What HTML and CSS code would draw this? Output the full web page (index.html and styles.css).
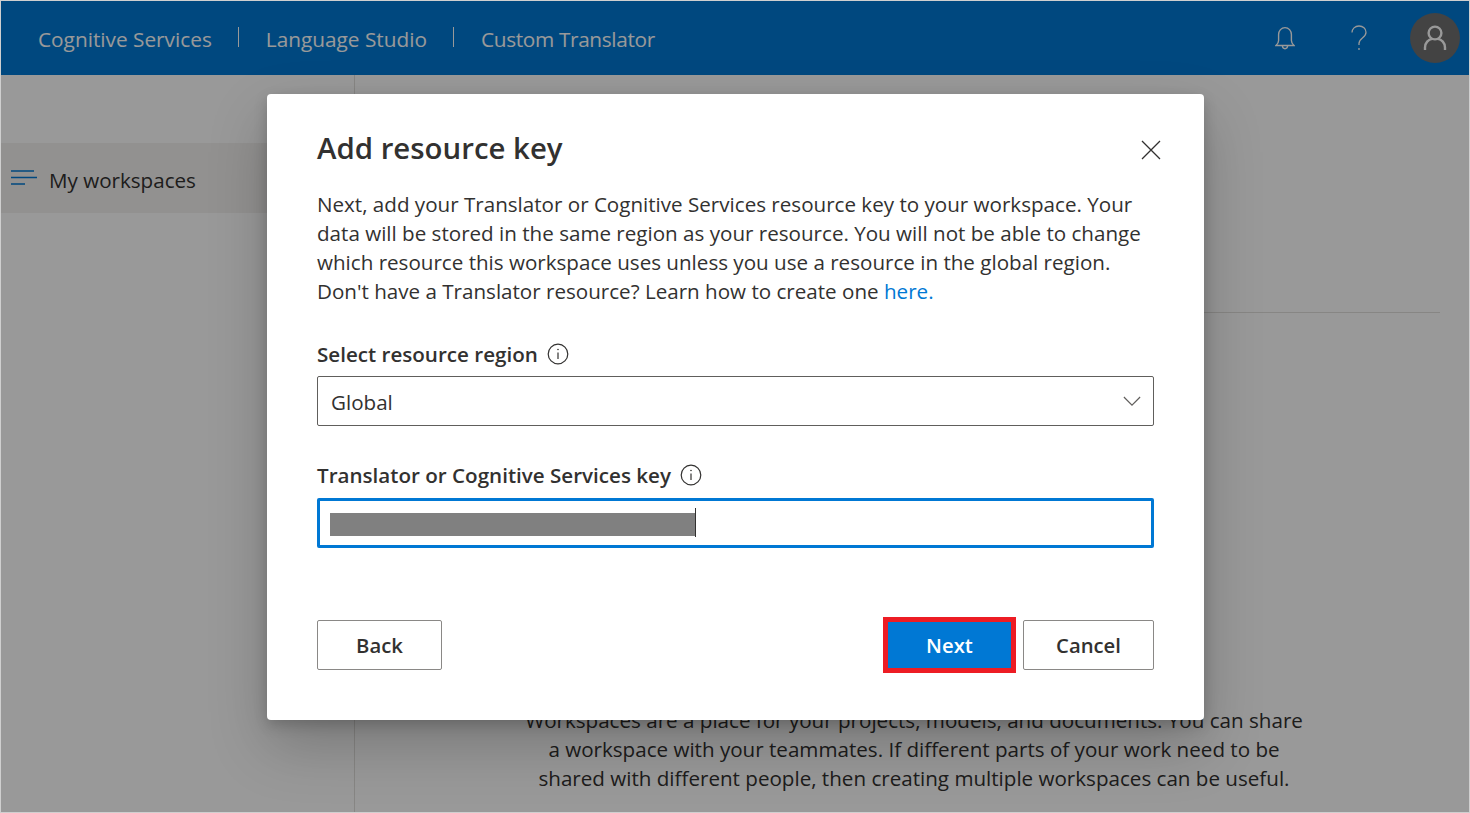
FILE: index.html
```html
<!DOCTYPE html>
<html>
<head>
  <title>Custom Translator - Add resource key</title>
  <link rel="stylesheet" href="styles.css">
</head>
<body>
  <div class="frame">
    <header class="topbar">
      <nav class="crumbs">
        <a class="crumb" href="#">Cognitive Services</a>
        <span class="crumb-sep"></span>
        <a class="crumb" href="#">Language Studio</a>
        <span class="crumb-sep"></span>
        <a class="crumb crumb-last" href="#">Custom Translator</a>
      </nav>
      <div class="top-actions">
        <svg class="bell-icon" width="20" height="24" viewBox="0 0 20 24" fill="none" stroke="#fff" stroke-width="1.400">
          <path d="M1 19.5h18c-1.6-1.4-2.6-2.7-2.6-5V8.6C16.4 4.6 13.6 1.6 10 1.6S3.6 4.6 3.6 8.6v5.900c0 2.300-1 3.600-2.600 5z"/>
          <path d="M7.400 20c.2 1.500 1.300 2.700 2.600 2.700s2.400-1.200 2.600-2.700"/>
        </svg>
        <svg class="help-icon" width="16" height="26" viewBox="0 0 16 26" fill="none" stroke="#fff" stroke-width="1.300">
          <path d="M1 7.500C1 3.800 4 1 8 1s7 2.700 7 6.200c0 2.800-1.600 4.200-3.600 5.700-2.200 1.700-3.400 3-3.400 5.600v1.500"/>
          <circle cx="8" cy="24" r=".9" fill="#fff" stroke="none"/>
        </svg>
        <div class="avatar">
          <svg width="24" height="26" viewBox="0 0 24 26" fill="none" stroke="#fff" stroke-width="2.400">
            <circle cx="12" cy="8" r="6.400"/>
            <path d="M2 25v-2.500c0-4.600 3.400-8.100 7.200-8.600M22 25v-2.500c0-4.600-3.400-8.100-7.200-8.600"/>
          </svg>
        </div>
      </div>
    </header>

    <div class="page">
      <aside class="sidebar">
        <div class="side-item">
          <svg class="menu-icon" width="26" height="16" viewBox="0 0 26 16" stroke="#0078d4" stroke-width="1.400">
            <path d="M0 1h23M0 7.500h26M0 14h14"/>
          </svg>
          <span class="side-text">My workspaces</span>
        </div>
      </aside>
      <main class="content">
        <div class="content-rule"></div>
        <p class="intro">Workspaces are a place for your projects, models, and documents. You can share<br>a workspace with your teammates. If different parts of your work need to be<br>shared with different people, then creating multiple workspaces can be useful.</p>
      </main>
    </div>

    <div class="scrim">
      <div class="dialog">
        <div class="dialog-head">
          <h2>Add resource key</h2>
          <svg class="close-icon" width="20" height="20" viewBox="0 0 20 20" stroke="#323130" stroke-width="1.300">
            <path d="M1 1l18 18M19 1L1 19"/>
          </svg>
        </div>
        <p class="dialog-text">Next, add your Translator or Cognitive Services resource key to your workspace. Your<br>data will be stored in the same region as your resource. You will not be able to change<br>which resource this workspace uses unless you use a resource in the global region.<br>Don't have a Translator resource? Learn how to create one <a href="#">here.</a></p>

        <label class="field-label region-label">Select resource region
          <svg class="info-icon" width="22" height="22" viewBox="0 0 22 22" fill="none" stroke="#323130" stroke-width="1.200">
            <circle cx="11" cy="11" r="9.800"/>
            <path d="M11 9.500v6.500"/>
            <circle cx="11" cy="6.500" r=".8" fill="#323130" stroke="none"/>
          </svg>
        </label>
        <div class="select-box">
          <span class="select-value">Global</span>
          <svg width="18" height="11" viewBox="0 0 20 12" fill="none" stroke="#605e5c" stroke-width="1.300">
            <path d="M1 1l9 9 9-9"/>
          </svg>
        </div>

        <label class="field-label key-label">Translator or Cognitive Services key
          <svg class="info-icon" width="22" height="22" viewBox="0 0 22 22" fill="none" stroke="#323130" stroke-width="1.200">
            <circle cx="11" cy="11" r="9.800"/>
            <path d="M11 9.500v6.500"/>
            <circle cx="11" cy="6.500" r=".8" fill="#323130" stroke="none"/>
          </svg>
        </label>
        <div class="key-box">
          <div class="key-mask"></div>
        </div>

        <div class="dialog-foot">
          <button class="btn">Back</button>
          <div class="foot-right">
            <button class="btn btn-primary">Next</button>
            <button class="btn btn-cancel">Cancel</button>
          </div>
        </div>
      </div>
    </div>
  </div>
</body>
</html>
```

FILE: styles.css
```css
* {
  box-sizing: border-box;
}

body {
  margin: 0;
  font-family: "Open Sans", "Noto Sans", sans-serif;
  font-size: 20.6px;
  color: #323130;
}

.frame {
  position: relative;
  width: 1470px;
  height: 813px;
  border: 1px solid #cfcfcf;
  background-color: #fff;
  overflow: hidden;
}

.topbar {
  display: flex;
  justify-content: space-between;
  align-items: center;
  height: 74px;
  padding: 0 9px 0 37px;
  background-color: #0078d4;
}

.crumbs {
  display: flex;
  align-items: center;
  padding-top: 2px;
  font-size: 20.8px;
}

.crumb {
  color: #fff;
  text-decoration: none;
}

.crumb-last {
  letter-spacing: -0.35px;
}

.crumb-sep {
  width: 1px;
  height: 20px;
  margin: 0 27px 4px 26px;
  background-color: #fff;
}

.top-actions {
  display: flex;
  align-items: center;
}

.bell-icon {
  margin-right: 56px;
}

.help-icon {
  margin-right: 43px;
}

.avatar {
  display: flex;
  justify-content: center;
  align-items: center;
  width: 50px;
  height: 50px;
  border-radius: 50%;
  background-color: #707070;
}

.page {
  display: flex;
  height: 737px;
}

.sidebar {
  width: 354px;
  padding-top: 68px;
  border-right: 1px solid #e1dfdd;
}

.side-item {
  display: flex;
  align-items: center;
  height: 70px;
  padding-left: 10px;
  background-color: #f3f2f1;
  gap: 12px;
}

.side-text {
  padding-top: 3px;
}

.content {
  flex: 1;
  padding: 0 29px 0 0;
}

.content-rule {
  height: 1px;
  margin-top: 237px;
  background-color: #e1dfdd;
}

.intro {
  margin: 393px 0 0 33px;
  text-align: center;
  line-height: 29px;
}

.scrim {
  position: absolute;
  top: 0;
  left: 0;
  width: 100%;
  height: 100%;
  padding: 93px 0 0 266px;
  background-color: rgba(0, 0, 0, 0.4);
}

.dialog {
  width: 937px;
  height: 626px;
  padding: 30px 50px 0;
  border-radius: 4px;
  background-color: #fff;
  box-shadow: 0 25px 58px rgba(0, 0, 0, 0.22), 0 5px 14px rgba(0, 0, 0, 0.18);
}

.dialog-head {
  display: flex;
  justify-content: space-between;
  align-items: center;
  height: 50px;
}

.dialog-head h2 {
  margin: -2px 0 0;
  font-size: 29.4px;
  font-weight: 600;
}

.close-icon {
  margin-right: -7px;
  margin-top: 1px;
}

.dialog-text {
  margin: 16px 0 0;
  line-height: 29px;
}

.dialog-text a {
  color: #0078d4;
  text-decoration: none;
}

.field-label {
  display: flex;
  align-items: center;
  gap: 9px;
  height: 30px;
  font-size: 20.6px;
  font-weight: 600;
}

.region-label {
  margin-top: 33px;
}

.key-label {
  margin-top: 34px;
}

.select-box {
  display: flex;
  justify-content: space-between;
  align-items: center;
  height: 50px;
  margin-top: 7px;
  padding: 0 12px 0 13px;
  border: 1px solid #605e5c;
  border-radius: 2px;
}

.select-value {
  padding-top: 2px;
}

.key-box {
  display: flex;
  align-items: center;
  height: 50px;
  margin-top: 8px;
  padding: 2px 0 0 10px;
  border: 3px solid #0078d4;
  border-radius: 2px;
}

.key-mask {
  position: relative;
  width: 366px;
  height: 23px;
  background-color: #808080;
}

.key-mask::after {
  content: '';
  position: absolute;
  top: -5px;
  right: 0;
  width: 1px;
  height: 29px;
  background-color: #323130;
}

.dialog-foot {
  display: flex;
  justify-content: space-between;
  margin-top: 72px;
}

.foot-right {
  display: flex;
  gap: 10px;
}

.btn {
  width: 125px;
  height: 50px;
  padding: 0;
  border: 1px solid #8a8886;
  border-radius: 2px;
  background-color: #fff;
  color: #323130;
  font-family: inherit;
  font-size: 20.3px;
  font-weight: 600;
}

.btn-primary {
  width: 127px;
  border: none;
  border-radius: 0;
  background-color: #0078d4;
  color: #fff;
  font-weight: 600;
  outline: 5px solid #ed1c24;
  outline-offset: -2px;
}

.btn-cancel {
  width: 131px;
}
```
